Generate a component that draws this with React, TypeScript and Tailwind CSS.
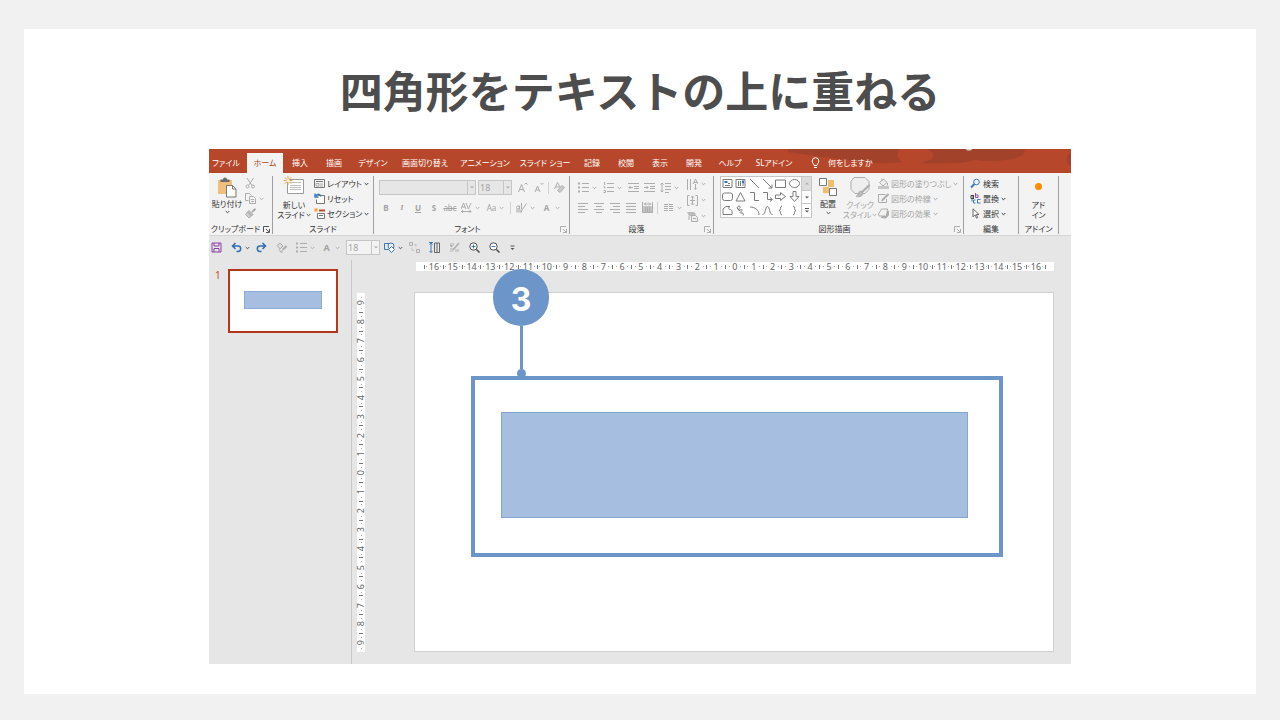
import type { ReactNode } from 'react';
import clsx from 'clsx';

const GRAY = '#adadad';
const DARK = '#555555';
const BLUE = '#3d7ab8';

interface GlyphProps {
  w?: number;
  h?: number;
  color?: string;
  children: ReactNode;
}

function Glyph({ w = 11, h = 11, color = GRAY, children }: GlyphProps) {
  return (
    <svg
      width={w}
      height={h}
      viewBox={`0 0 ${w} ${h}`}
      fill="none"
      stroke={color}
      strokeWidth="1"
      className="shrink-0"
      aria-hidden="true"
    >
      {children}
    </svg>
  );
}

function Chevron({ color = GRAY }: { color?: string }) {
  return (
    <Glyph w={5} h={4} color={color}>
      <path d="M.7 1l1.8 1.8L4.300 1" />
    </Glyph>
  );
}

function Launcher({ color = GRAY }: { color?: string }) {
  return (
    <button aria-label="詳細" className="absolute right-[2px] bottom-px">
      <Glyph w={7} h={7} color={color}>
        <path d="M.5 6V.5H6M3 3l3 3M6.500 3v3.500H3" />
      </Glyph>
    </button>
  );
}

interface ToolProps {
  label: string;
  split?: boolean;
  start?: boolean;
  chevron?: string;
  children: ReactNode;
}

function Tool({ label, split, start, chevron, children }: ToolProps) {
  return (
    <button
      aria-label={label}
      className={clsx(
        'flex h-4 shrink-0 items-center gap-[3px]',
        split ? 'w-[25px]' : start ? 'w-5' : 'w-4',
        start ? 'justify-start' : 'justify-center',
      )}
    >
      {children}
      {split && <Chevron color={chevron} />}
    </button>
  );
}

function Separator() {
  return <span className="mx-[2px] h-3 w-px shrink-0 bg-[#d2d2d2]" />;
}

interface GroupProps {
  title: string;
  className: string;
  launcher?: string;
  children: ReactNode;
}

function Group({ title, className, launcher, children }: GroupProps) {
  return (
    <section className={clsx('relative flex shrink-0 flex-col border-r border-[#9f9f9f]', className)}>
      <div className="flex-1">{children}</div>
      <h2 className="text-center text-[8px] leading-[10px] whitespace-nowrap text-[#333]">{title}</h2>
      {launcher && <Launcher color={launcher} />}
    </section>
  );
}

function Combo({ label, value, className }: { label: string; value: string; className: string }) {
  return (
    <div className={clsx('flex h-[15px] shrink-0 border border-[#c6c6c6]', className)}>
      <select aria-label={label} className="min-w-0 flex-1 appearance-none pl-px text-[9px] leading-[13px] text-[#a3a3a3]">
        <option>{value}</option>
      </select>
      <span className="flex w-2 items-center justify-center border-l border-[#c6c6c6]">
        <Glyph w={4} h={3}>
          <path d="M0 .5h4L2 2.500z" fill={GRAY} stroke="none" />
        </Glyph>
      </span>
    </div>
  );
}

function BulletsIcon() {
  return (
    <Glyph>
      <path d="M0 1.500h2M0 5.500h2M0 9.500h2" strokeWidth="2" />
      <path d="M4 1.500h7M4 5.500h7M4 9.500h7" />
    </Glyph>
  );
}

const alignPaths = [
  'M0 1.500h10M0 4.500h7M0 7.500h10M0 10.500h7',
  'M0 1.500h10M2 4.500h6M0 7.500h10M2 10.500h6',
  'M0 1.500h10M3 4.500h7M0 7.500h10M3 10.500h7',
  'M0 1.500h10M0 4.500h10M0 7.500h10M0 10.500h10',
];
const alignNames = ['左揃え', '中央揃え', '右揃え', '両端揃え'];

const tabs = [
  { name: '挿入', width: 'w-[34px]' },
  { name: '描画', width: 'w-[34px]' },
  { name: 'デザイン', width: 'w-[44px]' },
  { name: '画面切り替え', width: 'w-[60px]' },
  { name: 'アニメーション', width: 'w-[60px]' },
  { name: 'スライド ショー', width: 'w-[60px]' },
  { name: '記録', width: 'w-[34px]' },
  { name: '校閲', width: 'w-[34px]' },
  { name: '表示', width: 'w-[34px]' },
  { name: '開発', width: 'w-[34px]' },
  { name: 'ヘルプ', width: 'w-[38px]' },
  { name: 'SLアドイン', width: 'w-[50px]' },
];

function TabBar() {
  return (
    <nav className="relative flex h-6 items-end overflow-hidden bg-[#b7472a] text-[8px] text-white">
      {/* title bar artwork behind the right-hand tabs */}
      <svg width="283" height="24" viewBox="0 0 283 24" className="absolute top-0 right-0" aria-hidden="true">
        <path d="M0 0H112Q106 7 114 13Q90 16 60 11Q30 8 0 3z" fill="#a2422b" />
        <path d="M138 0H236Q240 8 218 11Q200 13 188 11Q172 16 132 14Q156 8 138 0z" fill="#a2422b" />
        <path d="M283 3Q276 8 280 15L283 17z" fill="#a2422b" />
        <ellipse cx="181" cy="0" rx="3" ry="1.500" fill="#d9d0cc" />
      </svg>
      <button className="h-5 w-[38px] shrink-0 pr-1 whitespace-nowrap">ファイル</button>
      <button className="h-5 w-9 shrink-0 bg-[#f3f3f3] whitespace-nowrap text-[#b7472a]">ホーム</button>
      {tabs.map((tab) => (
        <button key={tab.name} className={clsx('relative flex h-5 shrink-0 items-center justify-center whitespace-nowrap', tab.width)}>
          {tab.name}
        </button>
      ))}
      <button className="relative flex h-5 shrink-0 items-center gap-2 pl-3 whitespace-nowrap">
        <Glyph w={9} h={12} color="#ffffff">
          <path d="M3 8.500C3 7 1.200 6.200 1.200 4a3.300 3.300 0 0 1 6.600 0C7.800 6.200 6 7 6 8.500zM3 10.500h3" />
        </Glyph>
        何をしますか
      </button>
    </nav>
  );
}

function SmallCommand({ label, icon, color, chevron }: { label: string; icon: ReactNode; color: string; chevron?: boolean }) {
  return (
    <button className={clsx('flex h-[15px] items-center gap-[2px] text-[8px] whitespace-nowrap', color)}>
      {icon}
      {label}
      {chevron && <Chevron color="currentColor" />}
    </button>
  );
}

function ClipboardGroup() {
  return (
    <Group title="クリップボード" className="w-16 pr-[10px]" launcher={DARK}>
      <div className="flex gap-[3px] pl-[3px]">
        <button className="flex w-[30px] flex-col items-center text-[8px] leading-[12px] whitespace-nowrap text-[#333]">
          <Glyph w={20} h={22}>
            <path d="M1 4h14v14H1z" fill="#edc07d" stroke="none" />
            <path d="M3.500 6V3.500h2.500a2 2 0 0 1 4 0h2.500V6z" fill="#6a6a6a" stroke="none" />
            <path d="M9.500 9.500h6l3.500 3.500v8H9.500z" fill="#fff" stroke="#777" />
            <path d="M15.500 9.500V13H19" stroke="#777" />
          </Glyph>
          貼り付け
          <Chevron color={DARK} />
        </button>
        <div className="flex flex-col">
          <button aria-label="切り取り" className="h-[15px]">
            <Glyph>
              <path d="M2 0l5 7.500M8.500 0l-5 7.500" />
              <circle cx="2.500" cy="8.500" r="1.500" />
              <circle cx="8" cy="8.500" r="1.500" />
            </Glyph>
          </button>
          <button aria-label="コピー" className="flex h-[15px] items-center gap-[3px]">
            <Glyph>
              <path d="M3.500 7.500H.5V.5h4l2 2M4.500 3.500h4l2 2v5h-6zM6 6.500h3M6 8.500h3" />
            </Glyph>
            <Chevron />
          </button>
          <button aria-label="書式のコピー" className="h-[15px]">
            <Glyph>
              <path d="M10.500.8L7 4" strokeWidth="2" />
              <path d="M4 2.500l4 4-1.500 1.500-4-4z" fill="#bbb" />
              <path d="M2.500 4L.5 6.500 4 10l2.500-2z" fill="#ccc" />
            </Glyph>
          </button>
        </div>
      </div>
    </Group>
  );
}

function SlidesGroup() {
  return (
    <Group title="スライド" className="w-[101px]">
      <div className="flex gap-[5px] pl-[6px]">
        <button className="flex w-[30px] flex-col items-center text-[8px] leading-[10px] whitespace-nowrap text-[#333]">
          <span className="h-6">
            <Glyph w={22} h={20}>
              <path d="M4.500 3.500h16v14h-16z" fill="#fff" stroke="#9a9a9a" />
              <path d="M7 6.500h11M7 9.500h11M7 11.500h11M7 13.500h11" stroke="#c0c0c0" />
              <path d="M5 0v9M.5 4.500h9M1.800 1.300l6.400 6.400M8.200 1.300L1.800 7.700" stroke="#eda53b" />
              <circle cx="5" cy="4.500" r="1.500" fill="#fff" stroke="none" />
            </Glyph>
          </span>
          新しい
          <span className="flex items-center gap-px">
            スライド
            <Chevron color={DARK} />
          </span>
        </button>
        <div>
          <SmallCommand
            label="レイアウト"
            color="text-[#333]"
            chevron
            icon={
              <Glyph color="#777">
                <path d="M.5 1.500h10v8H.5zM2 3.500h7" />
                <path d="M2 5.500h3v2.500H2zM6 6h3M6 8h3" stroke="#aaa" />
              </Glyph>
            }
          />
          <SmallCommand
            label="リセット"
            color="text-[#333]"
            icon={
              <Glyph color="#777">
                <path d="M3.500 2.500h7v8h-8v-4" fill="#fff" />
                <path d="M1 .5v3.500h3.500M1.200 3.500C3 .5 6 .5 7 3.500" stroke={BLUE} strokeWidth="1.400" />
              </Glyph>
            }
          />
          <SmallCommand
            label="セクション"
            color="text-[#333]"
            chevron
            icon={
              <Glyph color="#777">
                <path d="M3.500 5.500h7v5h-7zM5 7.500h4" fill="#fff" />
                <path d="M5 2.500h6" stroke="#c24b2f" strokeWidth="2" />
                <path d="M2 0v4M0 2h4M.6.6l2.800 2.800M3.400.6L.6 3.400" stroke="#eda53b" />
              </Glyph>
            }
          />
        </div>
      </div>
    </Group>
  );
}

function FontGroup() {
  return (
    <Group title="フォント" className="w-[196px] pr-2" launcher={GRAY}>
      <div className="flex h-5 items-center gap-[2px] pt-[3px] pl-[5px]">
        <Combo label="フォント" value="" className="w-[97px] bg-[#e6e6e6]" />
        <Combo label="フォント サイズ" value="18" className="w-[34px] bg-[#e6e6e6]" />
        <div className="flex items-center">
          <Tool label="拡大">
            <Glyph>
              <path d="M1.500 10L4.500 2.500 7.500 10M2.500 7.500h4M7.500 2.500L9 1l1.500 1.500" />
            </Glyph>
          </Tool>
          <Tool label="縮小">
            <Glyph>
              <path d="M2 10l2.500-6L7 10M3 8h3M7.500 1L9 2.500 10.500 1" />
            </Glyph>
          </Tool>
          <Separator />
          <Tool label="書式のクリア">
            <Glyph>
              <path d="M.5 7L3.500.5 6 5M1.500 5h4" />
              <path d="M3.500 8.500l4.500-5 2.500 2-4.500 5z" fill="#ccc" />
            </Glyph>
          </Tool>
        </div>
      </div>
      <div className="flex h-[23px] items-center pl-1 text-[8px] font-bold text-[#a3a3a3]">
        <Tool label="太字">B</Tool>
        <Tool label="斜体">
          <span className="font-serif italic">I</span>
        </Tool>
        <Tool label="下線">
          <span className="underline">U</span>
        </Tool>
        <Tool label="影">S</Tool>
        <Tool label="取り消し線">
          <span className="font-normal line-through">abc</span>
        </Tool>
        <Tool label="文字の間隔" split>
          <Glyph>
            <path d="M0 7L2.500 1 5 7M1 5h3M5 1l2.500 6L10 1M0 9.500h10M2 8L.5 9.500 2 11M8.500 8L10 9.500 8.500 11" />
          </Glyph>
        </Tool>
        <Tool label="文字種の変換" split>
          <span className="font-normal">Aa</span>
        </Tool>
        <Separator />
        <Tool label="蛍光ペン" split>
          <Glyph>
            <path d="M0 9h6" strokeWidth="3" stroke="#c9c9c9" />
            <path d="M.5 5.500a1.500 1.500 0 1 0 3 0 1.500 1.500 0 1 0-3 0M3.500 3.500v4M5.500 1v6M10.500 1.500L6 8l-1 2.500" />
          </Glyph>
        </Tool>
        <Tool label="フォントの色" split>
          <span className="w-[11px] text-center">A</span>
        </Tool>
      </div>
    </Group>
  );
}

function ParagraphGroup() {
  return (
    <Group title="段落" className="w-36 pr-[10px]" launcher={GRAY}>
      <div className="flex pl-[5px]">
        <div className="w-[109px] shrink-0">
          <div className="flex h-5 items-center pt-[3px]">
            <Tool label="箇条書き" split>
              <BulletsIcon />
            </Tool>
            <Tool label="段落番号" split>
              <Glyph>
                <path d="M1.500 0v3M.5 4.500h1v1.500h1M.5 8.500h2v2h-2M4 1.500h7M4 5.500h7M4 9.500h7" />
              </Glyph>
            </Tool>
            <Tool label="インデントを減らす">
              <Glyph>
                <path d="M0 1.500h11M6 4.500h5M6 6.500h5M0 9.500h11M5 5.500H1M2.500 4L1 5.500 2.500 7" />
              </Glyph>
            </Tool>
            <Tool label="インデントを増やす">
              <Glyph>
                <path d="M0 1.500h11M6 4.500h5M6 6.500h5M0 9.500h11M0 5.500h4M2.500 4L4 5.500 2.500 7" />
              </Glyph>
            </Tool>
            <Tool label="行間" split>
              <Glyph>
                <path d="M5 1.500h6M5 4.500h6M5 7.500h6M5 10.500h4M2 1v9M.5 2.500L2 1l1.500 1.500M.5 8.500L2 10l1.500-1.500" />
              </Glyph>
            </Tool>
          </div>
          <div className="flex h-[23px] items-center">
            {alignNames.map((name, i) => (
              <Tool key={name} label={name}>
                <Glyph w={10} h={12}>
                  <path d={alignPaths[i]} />
                </Glyph>
              </Tool>
            ))}
            <Tool label="均等割り付け">
              <Glyph>
                <path d="M0 4h11v7H0z" fill="#c4c4c4" stroke="none" />
                <path d="M.5 0v10.500h10V0M2 2h7M4 .5L2.500 2 4 3.500M7 .5L8.500 2 7 3.500M3.500 5v5M5.500 5v5M7.500 5v5" />
              </Glyph>
            </Tool>
            <Separator />
            <Tool label="段組み" split>
              <Glyph>
                <path d="M1 2.500h4M1 4.500h4M1 6.500h4M1 8.500h4M6 2.500h4M6 4.500h4M6 6.500h4M6 8.500h4" />
              </Glyph>
            </Tool>
          </div>
        </div>
        <div className="flex flex-col">
          <Tool label="文字列の方向" split>
            <Glyph>
              <path d="M.5 0v11M3.500 0v11M6 5L8.500 0 11 5M7 3.500h3M8.500 5v5M7.500 9l1 1.500 1-1.500" />
            </Glyph>
          </Tool>
          <Tool label="文字の配置" split>
            <Glyph>
              <path d="M2.500.5h-2v10h2M8.500.5h2v10h-2M5.500 1v9M4 2.500L5.500 1 7 2.500M4 8.500L5.500 10 7 8.500M3 5.500h5" />
            </Glyph>
          </Tool>
          <Tool label="SmartArt に変換" split>
            <Glyph>
              <path d="M0 1h7l2 2-2 2H2z" fill="#bbb" stroke="none" />
              <path d="M4.500 4.500h4l2 2v4h-6zM6 7.500h3M2 5v4" fill="#eee" />
            </Glyph>
          </Tool>
        </div>
      </div>
    </Group>
  );
}

const shapes = [
  { name: 'テキスト ボックス', d: 'M1 1.500h9v8H1zM3 7.500h5M6 5.500h2' },
  { name: '縦書きテキスト', d: 'M1 1.500h9v8H1zM3.500 3v5M5.500 3v5M8 6v2' },
  { name: '線', d: 'M1 1l9 9' },
  { name: '矢印', d: 'M1 1l9 9M10 6.500V10H6.500' },
  { name: '正方形/長方形', d: 'M.5 2h10v7.500H.5z' },
  { name: '楕円', d: 'M.5 5.500a5 4 0 1 0 10 0 5 4 0 1 0-10 0' },
  { name: '角丸四角形', d: 'M2.500 2h6a2 2 0 0 1 2 2v3.500a2 2 0 0 1-2 2h-6a2 2 0 0 1-2-2V4a2 2 0 0 1 2-2z' },
  { name: '三角形', d: 'M5.500 1.500l4.500 8.500H1z' },
  { name: 'カギ線', d: 'M1 1.500h4.500v8h4.500' },
  { name: 'カギ線矢印', d: 'M1 1.500h4.500v7h4.500M8 6.500l2.500 2-2.500 2' },
  { name: '右矢印', d: 'M.5 4h5V1.500l5 4-5 4V7.500h-5z' },
  { name: '下矢印', d: 'M4 .5h3v5h3l-4.500 5-4.500-5h3z' },
  { name: 'フリーフォーム', d: 'M1 9.500V4l3-2.500h4C6 2.500 6.500 4.500 8 4.500s2.500 1 2 5z' },
  { name: 'フリーハンド', d: 'M2 3C3 0 6 1 5 2.500S2 5 4 5s4-1 3 .5-3 2.500-1 2.500 3 0 2 2.500M2 3l3 3' },
  { name: '円弧', d: 'M1 2c5 0 9 3 9 8' },
  { name: '曲線', d: 'M.5 9.500C4 9.500 3 1.500 5.500 1.500S7 9.500 10.500 9.500' },
  { name: '左中かっこ', d: 'M7 1C4.500 1 6.500 5.500 4 5.500 6.500 5.500 4.500 10 7 10' },
  { name: '右中かっこ', d: 'M4 1c2.500 0 .5 4.500 3 4.500-2.500 0-.5 4.500-3 4.500' },
];

function DrawingGroup() {
  return (
    <Group title="図形描画" className="w-[250px] pr-2" launcher={GRAY}>
      <div className="flex pl-[6px]">
        <div className="flex h-[42px] w-[92px] shrink-0 border border-[#c6c6c6] bg-white">
          <div className="grid flex-1 grid-cols-6 items-center justify-items-center">
            {shapes.map((shape, i) => (
              <button key={shape.name} aria-label={shape.name}>
                <Glyph color="#7c7c7c">
                  <path d={shape.d} />
                  {i < 2 && <path d={i === 0 ? 'M2.500 4h3' : 'M8 2.500v3'} stroke="#2f74b5" strokeWidth="2" />}
                </Glyph>
              </button>
            ))}
          </div>
          <div className="flex w-[10px] flex-col divide-y divide-[#c6c6c6] border-l border-[#c6c6c6]">
            <button aria-label="上へ" className="flex flex-1 items-center justify-center bg-[#dcdcdc]">
              <Glyph w={4} h={3}>
                <path d="M0 2.500h4L2 .5z" fill="#aaa" stroke="none" />
              </Glyph>
            </button>
            <button aria-label="下へ" className="flex flex-1 items-center justify-center">
              <Glyph w={4} h={3}>
                <path d="M0 .5h4L2 2.500z" fill={DARK} stroke="none" />
              </Glyph>
            </button>
            <button aria-label="その他" className="flex flex-1 items-center justify-center">
              <Glyph w={4} h={5} color={DARK}>
                <path d="M0 .5h4" />
                <path d="M0 2.500h4L2 4.500z" fill={DARK} stroke="none" />
              </Glyph>
            </button>
          </div>
        </div>
        <div className="flex flex-1 pl-[2px]">
          <button className="flex w-7 shrink-0 flex-col items-center gap-px text-[8px] leading-[12px] text-[#333]">
            <Glyph w={20} h={21} color="#777">
              <path d="M10 4h6v7h-6zM5 11h6v6H5z" fill="#f0be6c" stroke="none" />
              <path d="M1.500 2.500h7v7h-7zM11.500 12.500h7v7h-7z" fill="#fff" />
            </Glyph>
            配置
            <Chevron color={DARK} />
          </button>
          <button className="flex w-9 shrink-0 flex-col items-center text-[8px] leading-[10px] whitespace-nowrap text-[#a3a3a3]">
            <span className="h-6">
              <Glyph w={22} h={22}>
                <path d="M5 1.500h11l4 4v8l-4 4H6l-4-4v-8z" fill="#eeeeee" strokeLinejoin="round" />
                <path d="M20.500 9L12 17" strokeWidth="2" />
                <path d="M12 15c-3 0-2 4-5 5.500 4 .5 7-.5 7-3.500z" fill="#bbb" />
              </Glyph>
            </span>
            クイック
            <span className="flex items-center gap-px">
              スタイル
              <Chevron />
            </span>
          </button>
          <div>
            <SmallCommand
              label="図形の塗りつぶし"
              color="text-[#a3a3a3]"
              chevron
              icon={
                <Glyph>
                  <path d="M0 9.500h11" strokeWidth="3" stroke="#c6c6c6" />
                  <path d="M1.500 4.500L5.500 1l3.500 3.500L5 8zM4 3V.5M9.500 5v2.500" fill="#eee" />
                </Glyph>
              }
            />
            <SmallCommand
              label="図形の枠線"
              color="text-[#a3a3a3]"
              chevron
              icon={
                <Glyph>
                  <path d="M8.500 6v3.500h-8v-8h7" />
                  <path d="M10.500 1L5 6.500l-1 1.500" strokeWidth="2" />
                </Glyph>
              }
            />
            <SmallCommand
              label="図形の効果"
              color="text-[#a3a3a3]"
              chevron
              icon={
                <Glyph>
                  <path d="M3 9.500l5 .5 2.500-3V3z" fill="#aaa" />
                  <path d="M3.500 1h6l-1 7H1L.5 6z" fill="#f3f3f3" strokeLinejoin="round" />
                </Glyph>
              }
            />
          </div>
        </div>
      </div>
    </Group>
  );
}

function EditingGroup() {
  return (
    <Group title="編集" className="w-[55px]">
      <div className="pl-[6px]">
        <SmallCommand
          label="検索"
          color="text-[#333]"
          icon={
            <Glyph color={BLUE}>
              <circle cx="6.500" cy="4" r="2.800" />
              <path d="M4.500 6L1 9.500" strokeWidth="2" />
            </Glyph>
          }
        />
        <SmallCommand
          label="置換"
          color="text-[#333]"
          chevron
          icon={
            <Glyph color="#444">
              <path d="M1 2.500h2v3H1zM3.500 2v4" />
              <path d="M5.500 0v4.500h2.500V2H5.500" stroke="#8650a8" />
              <path d="M5.500 7H3.500v3h2M2 6v2.500" stroke={BLUE} />
              <path d="M10.500 6.500H7.500v3.500h3" stroke={BLUE} />
            </Glyph>
          }
        />
        <SmallCommand
          label="選択"
          color="text-[#333]"
          chevron
          icon={
            <Glyph color="#666">
              <path d="M3 .8v8l2-2 1.500 3.400 1.200-.6L6.300 6.500H9z" fill="#fff" />
            </Glyph>
          }
        />
      </div>
    </Group>
  );
}

function Ribbon() {
  return (
    <div className="flex h-[63px] overflow-hidden border-b border-[#d5d5d5] bg-[#f3f3f3] pt-[3px] pb-px">
      <ClipboardGroup />
      <SlidesGroup />
      <FontGroup />
      <ParagraphGroup />
      <DrawingGroup />
      <EditingGroup />
      <Group title="アドイン" className="w-10">
        <button className="flex w-full flex-col items-center text-[8px] leading-[10px] text-[#333]">
          <span className="h-6 pt-[6px]">
            <Glyph w={9} h={9}>
              <circle cx="4.500" cy="4.500" r="3.500" fill="#ff8c00" stroke="none" />
            </Glyph>
          </span>
          <span>アド</span>
          <span>イン</span>
        </button>
      </Group>
    </div>
  );
}

function QuickAccess() {
  return (
    <div className="flex h-6 items-center overflow-hidden pb-px pl-[2px] text-[9px] text-[#a3a3a3]">
      <Tool label="上書き保存" start>
        <Glyph color="#8a3fa5">
          <path d="M1 1h9v9H1zM3 1v3h5V1M3 10V6.500h5V10" />
        </Glyph>
      </Tool>
      <Tool label="元に戻す" split start chevron={DARK}>
        <Glyph color="#2f6fae">
          <path d="M1.500 4H7a2.700 2.700 0 0 1 0 5.400H5.500M4.500 1L1.500 4l3 3" strokeWidth="1.500" />
        </Glyph>
      </Tool>
      <Tool label="やり直し" start>
        <Glyph color="#2f6fae">
          <path d="M9.500 4H4a2.700 2.700 0 0 0 0 5.400h1.500M6.500 1l3 3-3 3" strokeWidth="1.500" />
        </Glyph>
      </Tool>
      <Tool label="図形の書式" start>
        <Glyph>
          <path d="M1 3.500L4 1l3 3-3 3zM10.500 4L5.500 9M3 7.500l2 3 2-1" fill="#ddd" />
          <path d="M10.500 4L7 7.500" strokeWidth="2" />
        </Glyph>
      </Tool>
      <Tool label="箇条書き" split start>
        <BulletsIcon />
      </Tool>
      <Tool label="フォントの色" split start>
        <span className="w-[11px] text-center font-bold">A</span>
      </Tool>
      <Combo label="サイズ" value="18" className="w-[34px] bg-[#f3f3f3]" />
      <span className="w-1 shrink-0" />
      <Tool label="図形" split start chevron={DARK}>
        <Glyph color="#3f78b0">
          <path d="M.5 1.500h6v6h-6z" fill="#dfeaf5" />
          <circle cx="7" cy="4" r="3" fill="#eef4fa" />
          <path d="M7.500 4.500L10.500 7.500l-3 3-3-3z" fill="#fff" />
        </Glyph>
      </Tool>
      <Tool label="グループ化" start>
        <Glyph>
          <path d="M.5.5h3v3h-3zM7.500 7.500h3v3h-3z" />
          <path d="M5 2.500h2v2M3 5.500v3h2" stroke="#c4c4c4" />
        </Glyph>
      </Tool>
      <Tool label="高さを揃える" start>
        <Glyph color="#666">
          <path d="M5.500 1h5v9.500h-5zM8 1v9.500" />
          <path d="M2 1v9.500M.5 2.500L2 1l1.500 1.500M.5 9L2 10.500 3.500 9M0 .5h4" stroke={BLUE} />
        </Glyph>
      </Tool>
      <Tool label="配置" start>
        <Glyph>
          <path d="M1 1h4v3H1zM6 7h4v3H6zM1 6h3v4H1z" fill="#ccc" stroke="none" />
          <path d="M10 1L4 8M1.500 3L3 5" strokeWidth="1.500" />
        </Glyph>
      </Tool>
      <Tool label="拡大表示" start>
        <Glyph color="#4a4a4a">
          <circle cx="4.500" cy="4.500" r="3.700" fill="#fff" />
          <path d="M7.500 7.500l3 3" strokeWidth="1.500" />
          <path d="M2.500 4.500h4M4.500 2.500v4" stroke={BLUE} />
        </Glyph>
      </Tool>
      <Tool label="縮小表示" start>
        <Glyph color="#4a4a4a">
          <circle cx="4.500" cy="4.500" r="3.700" fill="#fff" />
          <path d="M7.500 7.500l3 3" strokeWidth="1.500" />
          <path d="M2.500 4.500h4" stroke={BLUE} />
        </Glyph>
      </Tool>
      <Tool label="ツール バーのユーザー設定" start>
        <Glyph w={7} h={6} color={DARK}>
          <path d="M1.500 1h4" />
          <path d="M1.500 3h4l-2 2z" fill={DARK} stroke="none" />
        </Glyph>
      </Tool>
    </div>
  );
}

const range = (n: number) => Array.from({ length: n * 2 + 1 }, (_, i) => Math.abs(i - n));

function HorizontalRuler() {
  return (
    <div className="ml-[2px] flex h-[9px] items-center bg-white px-2 text-[9px] leading-[9px] text-[#666]">
      {range(16).map((n, i) => (
        <div key={i} className="flex h-full min-w-0 flex-1 items-center justify-between">
          <span className="h-1 w-px bg-[#777]" />
          <span className="size-px bg-[#aaa]" />
          <span>{n}</span>
          <span className="size-px bg-[#aaa]" />
          <span />
        </div>
      ))}
      <span className="h-1 w-px bg-[#777]" />
    </div>
  );
}

function VerticalRuler() {
  return (
    <div className="mt-[22px] flex w-2 flex-col bg-white text-[9px] leading-[8px] text-[#666]">
      {range(9).map((n, i) => (
        <div key={i} className="flex min-h-0 w-full flex-1 flex-col items-center justify-between">
          <span className={clsx('h-px w-1', i > 0 && 'bg-[#777]')} />
          <span className="size-px bg-[#aaa]" />
          <span className="rotate-180 [writing-mode:vertical-rl]">
            <span className="[text-orientation:sideways]">{n}</span>
          </span>
          <span className="size-px bg-[#aaa]" />
          <span />
        </div>
      ))}
    </div>
  );
}

function Workspace() {
  return (
    <div className="flex flex-1">
      <aside className="flex w-[143px] shrink-0 items-start gap-[7px] border-r border-[#c8c8c8] pt-[9px] pl-[6px]">
        <span className="text-[10px] leading-[12px] text-[#d24726]">1</span>
        <div className="h-16 w-[110px] border-2 border-[#b7371a] bg-white px-[14px] py-5">
          <div className="h-[18px] border border-[#8aaad4] bg-[#a6bedf]" />
        </div>
      </aside>
      <div className="grid flex-1 grid-cols-[8px_1fr] gap-x-[49px] pt-[2px] pr-[17px] pb-3 pl-[5px]">
        <span />
        <HorizontalRuler />
        <VerticalRuler />
        <div className="relative mt-[21px] aspect-video border border-[#d0d0d0] bg-white">
          <div className="absolute top-[119px] right-[85px] left-[86px] h-[106px] border border-[#86a5cf] bg-[#a6bedf]" />
          <div className="absolute top-[83px] right-[50px] left-[56px] h-[181px] border-4 border-[#6c95c9]" />
          <div className="absolute top-[-24px] left-[78px] flex flex-col items-center">
            <span className="flex h-[57px] w-14 items-center justify-center rounded-full bg-[#6c95c9] pt-1 font-['Inter'] text-[32px] font-bold text-white">
              3
            </span>
            <span className="h-[43px] w-[3px] bg-[#6c95c9]" />
            <span className="size-[9px] rounded-full bg-[#6c95c9]" />
          </div>
        </div>
      </div>
    </div>
  );
}

export default function App() {
  return (
    <div
      lang="ja"
      className="min-h-screen bg-[#f1f1f1] px-6 pt-[29px] pb-[25px] font-['Noto_Sans','Noto_Sans_CJK_JP',sans-serif]"
    >
      <main className="bg-white px-6 pt-7 pb-[30px]">
        <h1 className="text-center font-['Noto_Sans_CJK_JP',sans-serif] text-[43px] leading-[64px] font-bold text-[#4d4d4d]">
          四角形をテキストの上に重ねる
        </h1>
        <div className="mx-auto mt-7 flex w-full max-w-[862px] flex-col bg-[#e6e6e6] font-['Noto_Sans','Noto_Sans_CJK_JP',sans-serif] [font-feature-settings:'palt']">
          <TabBar />
          <Ribbon />
          <QuickAccess />
          <Workspace />
        </div>
      </main>
    </div>
  );
}
